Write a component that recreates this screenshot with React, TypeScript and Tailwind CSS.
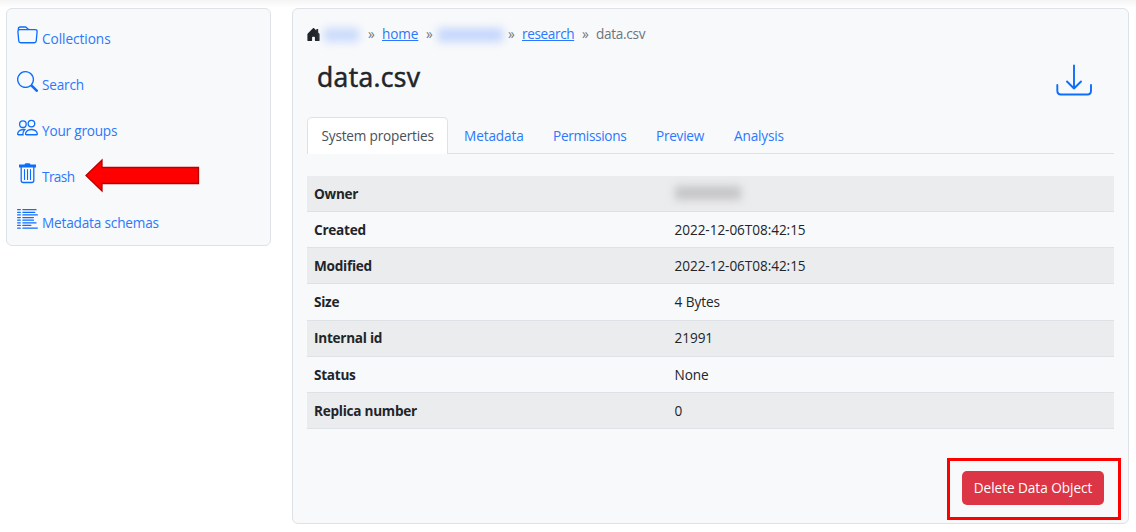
import type { SVGProps } from 'react';
import { BsFolder, BsSearch, BsPeople, BsListColumnsReverse, BsHouseDoorFill } from 'react-icons/bs';

function TrashIcon(props: SVGProps<SVGSVGElement>) {
  return (
    <svg viewBox="0 0 21 21" fill="none" stroke="currentColor" {...props}>
      <path d="M2 1.400H7.500Q8 .2 9 .2H12Q13 .2 13.500 1.400H19V4.500H2Z" fill="currentColor" stroke="none" />
      <path d="M4.200 4V17.500Q4.200 19.500 6.200 19.500H14.800Q16.800 19.500 16.800 17.500V4" strokeWidth="1.300" />
      <path d="M7.500 6.500V16.500M10.500 6.500V16.500M13.500 6.500V16.500" strokeWidth="1.100" strokeLinecap="round" />
    </svg>
  );
}

const nav = [
  { label: 'Collections', Icon: BsFolder, text: 'tracking-[-0.04px]' },
  { label: 'Search', Icon: BsSearch, text: 'tracking-[-0.2px]' },
  { label: 'Your groups', Icon: BsPeople, text: 'tracking-[-0.2px]' },
  { label: 'Trash', Icon: TrashIcon, text: 'tracking-[-0.6px]' },
  { label: 'Metadata schemas', Icon: BsListColumnsReverse, text: 'tracking-[-0.17px]' },
];

const rows = [
  ['Owner', ''],
  ['Created', '2022-12-06T08:42:15'],
  ['Modified', '2022-12-06T08:42:15'],
  ['Size', '4 Bytes'],
  ['Internal id', '21991'],
  ['Status', 'None'],
  ['Replica number', '0'],
];

const tabs = [
  { label: 'Metadata', box: 'w-[60px] ml-[16px] tracking-[-0.1px]' },
  { label: 'Permissions', box: 'w-[74px] ml-[29px] tracking-[-0.3px]' },
  { label: 'Preview', box: 'w-[49px] ml-[29px] tracking-[-0.25px]' },
  { label: 'Analysis', box: 'w-[51px] ml-[29px] tracking-[-0.15px]' },
];

export default function App() {
  return (
    <div className="relative h-[532px] w-[1136px] overflow-hidden bg-white bg-[linear-gradient(#f5f5f5,#ffffff_8px)] font-['Open_Sans',sans-serif] text-[13.6px] text-[#212529]">
      <div className="flex items-start pl-[6px] pt-[8px]">
        <aside className="flex h-[238px] w-[265px] flex-col rounded-[6px] border border-[#dee2e6] bg-[#f8f9fb] pl-[10px] pt-[6px]">
          {nav.map(({ label, Icon, text }) => (
            <a key={label} className="flex h-[46px] items-center text-[#0d6efd]">
              <Icon className="mb-[5px] mr-[4px] size-[21px] shrink-0" />
              <span className={`whitespace-nowrap pt-[3px] text-[#2b78fd] ${text}`}>{label}</span>
            </a>
          ))}
        </aside>
        <main className="ml-[21px] flex h-[516px] w-[837px] flex-col rounded-[6px] border border-[#dee2e6] bg-[#f8f9fb] px-[14px] pt-[14px]">
          <nav className="flex h-[22px] items-center whitespace-nowrap">
            <BsHouseDoorFill className="-ml-px size-[15px]" />
            <span className="ml-[3px] mt-[2px] h-[14px] w-[35px] bg-[#cbdbfc] blur-[4px]" />
            <span className="ml-[9px] w-[14px] text-[#6c757d]">»</span>
            <a className="w-[36px] tracking-[-0.1px] text-[#2b78fd] underline">home</a>
            <span className="ml-[8px] w-[13px] text-[#6c757d]">»</span>
            <span className="-ml-px mt-[2px] h-[14px] w-[65px] bg-[#c5d7fc] blur-[4px]" />
            <span className="ml-[5px] w-[14px] text-[#6c757d]">»</span>
            <a className="w-[52px] tracking-[-0.38px] text-[#2b78fd] underline">research</a>
            <span className="ml-[8px] w-[14px] text-[#6c757d]">»</span>
            <span className="tracking-[-0.3px] text-[#6c757d]">data.csv</span>
          </nav>
          <div className="flex h-[72px] justify-between pl-[10px] pr-[22px]">
            <h1 className="pt-[14px] text-[26.5px] font-medium leading-[36px] tracking-[0.35px] [-webkit-text-stroke:0.55px_#212529]">data.csv</h1>
            <svg className="mt-[18px] h-[36px] w-[36px] text-[#0d6efd]" viewBox="0 0 36 36" fill="none" stroke="currentColor" strokeWidth="1.9" strokeLinecap="round" strokeLinejoin="round">
              <path d="M1.300 22V27.500Q1.300 31.500 5 31.500H31.500Q35 31.500 35 27.500V22M18 2.500V25.500M11 18.500L18 25.500L25 18.500" />
            </svg>
          </div>
          <div className="flex h-[37px] shrink-0 border-b border-[#dee2e6]">
            <div className="h-[37px] w-[141px] whitespace-nowrap rounded-t-[5px] border border-b-0 border-[#dee2e6] bg-white pl-[13.5px] leading-[36px] tracking-[-0.18px] text-[#495057]">System properties</div>
            {tabs.map(({ label, box }) => (
              <a key={label} className={`whitespace-nowrap leading-[38px] text-[#2b78fd] ${box}`}>{label}</a>
            ))}
          </div>
          <div className="mt-[22px]">
            {rows.map(([name, value]) => (
              <div key={name} className="flex h-[36.15px] items-center border-b border-[#dee2e6] pl-[7px] pt-px odd:bg-[#ebecee]">
                <div className="w-[360.5px] font-bold tracking-[-0.27px]">{name}</div>
                {value ? <div className="tracking-[-0.06px]">{value}</div> : <div className="-mt-[2px] h-[14px] w-[66px] bg-[#c5c6c8] blur-[4px]" />}
              </div>
            ))}
          </div>
          <button className="mr-[10px] mt-[42px] h-[34px] w-[142px] self-end rounded-[5px] bg-[#dc3545] pt-px tracking-[-0.04px] text-white">Delete Data Object</button>
        </main>
      </div>
      <svg className="absolute left-[85px] top-[158px]" width="116" height="36" viewBox="0 0 116 36">
        <path d="M1 17.5L17 2V9.500H113.500V25.500H17V33Z" fill="#f00" stroke="#b80000" strokeWidth="1.3" />
      </svg>
      <div className="absolute left-[947px] top-[458px] h-[62px] w-[174px] border-[3px] border-[#f00]" />
    </div>
  );
}
